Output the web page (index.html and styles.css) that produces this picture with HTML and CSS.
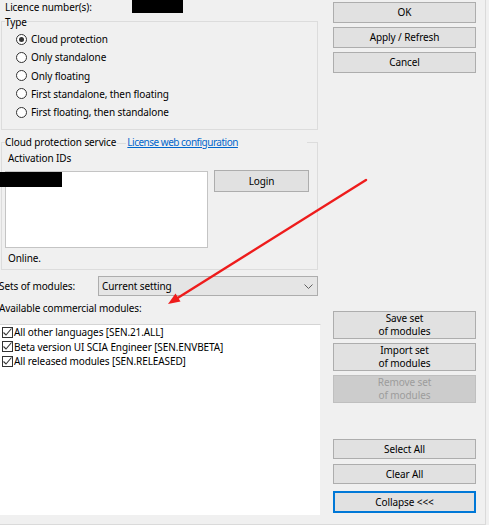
FILE: index.html
```html
<!DOCTYPE html>
<html lang="en">
  <head>
    <meta charset="UTF-8" />
    <title>Licence settings</title>
    <link rel="stylesheet" href="styles.css">
  </head>
  <body>
    <div class="dialog">
      <div class="main">
        <div class="licence-row">
          <span class="licence-label">Licence number(s):</span>
          <span class="redacted licence-id"></span>
        </div>

        <!-- Protection type -->
        <fieldset class="group type-group">
          <legend>Type</legend>
          <ul class="radio-list">
            <li><span class="radio checked"></span>Cloud protection</li>
            <li><span class="radio"></span>Only standalone</li>
            <li><span class="radio"></span>Only floating</li>
            <li><span class="radio"></span>First standalone, then floating</li>
            <li><span class="radio"></span>First floating, then standalone</li>
          </ul>
        </fieldset>

        <!-- Cloud service -->
        <fieldset class="group cloud-group">
          <legend><span>Cloud protection service</span><span class="legend-gap"></span><a href="#" class="legend-link">License web configuration</a></legend>
          <div class="field-label">Activation IDs</div>
          <div class="activation-row">
            <div class="activation-list"><span class="redacted activation-id"></span></div>
            <button class="btn login-btn">Login</button>
          </div>
          <div class="status">Online.</div>
        </fieldset>

        <div class="sets-row">
          <span class="sets-label">Sets of modules:</span>
          <div class="combo">
            <span>Current setting</span>
            <svg width="9" height="5" viewBox="0 0 9 5"><path d="M0.5 0.5 L4.5 4.5 L8.5 0.5" fill="none" stroke="#606060" stroke-width="1"/></svg>
          </div>
        </div>
        <div class="modules-label">Available commercial modules:</div>
        <ul class="module-list">
          <li><span class="check"><svg width="11" height="11" viewBox="0 0 11 11"><path d="M1.5 5.5 L4 8 L9.5 1.5" fill="none" stroke="#333" stroke-width="1.1"/></svg></span>All other languages [SEN.21.ALL]</li>
          <li><span class="check"><svg width="11" height="11" viewBox="0 0 11 11"><path d="M1.5 5.5 L4 8 L9.5 1.5" fill="none" stroke="#333" stroke-width="1.1"/></svg></span>Beta version UI SCIA Engineer [SEN.ENVBETA]</li>
          <li><span class="check"><svg width="11" height="11" viewBox="0 0 11 11"><path d="M1.5 5.5 L4 8 L9.5 1.5" fill="none" stroke="#333" stroke-width="1.1"/></svg></span>All released modules [SEN.RELEASED]</li>
        </ul>
      </div>

      <div class="side">
        <button class="btn ok-btn">OK</button>
        <button class="btn">Apply / Refresh</button>
        <button class="btn">Cancel</button>

        <button class="btn tall save-btn">Save set<br>of modules</button>
        <button class="btn tall">Import set<br>of modules</button>
        <button class="btn tall" disabled>Remove set<br>of modules</button>

        <button class="btn short select-btn">Select All</button>
        <button class="btn short">Clear All</button>
        <button class="btn collapse-btn">Collapse &lt;&lt;&lt;</button>
      </div>
    </div>

    <!-- annotation arrow -->
    <svg class="arrow" width="489" height="525" viewBox="0 0 489 525">
      <line x1="366" y1="180" x2="176" y2="299" stroke="#ee1c1c" stroke-width="2.4" stroke-linecap="round"/>
      <polygon points="168,304 180.5,301.5 175.5,293.5" fill="#ee1c1c"/>
    </svg>
  </body>
</html>
```

FILE: styles.css
```css
/* General */
html {
  background-color: #f0f0f0;
}

body {
  margin: 0;
  width: 489px;
  height: 525px;
  overflow: hidden;
  position: relative;
  font-family: "Noto Sans", "Open Sans", sans-serif;
  font-size: 10px;
  letter-spacing: -0.1px;
  color: #000;
  background-color: #f0f0f0;
}

ul {
  list-style: none;
  margin: 0;
  padding: 0;
}

.dialog {
  display: flex;
  width: 486px;
  height: 525px;
  border-right: 1px solid #dadada;
  border-bottom: 1px solid #dadada;
  box-sizing: border-box;
}

.main {
  width: 321px;
  flex: none;
}

.redacted {
  display: inline-block;
  background-color: #000;
}

/* Licence row */
.licence-row {
  display: flex;
  height: 14px;
  line-height: 14px;
  padding-left: 5px;
}

.licence-label {
  width: 127px;
}

.licence-id {
  width: 51px;
  height: 13px;
}

/* Group boxes */
.group {
  margin: 0 0 0 1px;
  width: 317px;
  min-width: 0;
  box-sizing: border-box;
  border: 1px solid #dcdcdc;
  padding: 0 0 0 3px;
}

.group legend {
  padding: 0;
  height: 14px;
  line-height: 14px;
  white-space: nowrap;
}

.type-group {
  height: 116px;
}

/* label text sits a little under the frame line */
.type-group legend {
  line-height: 17px;
}

.radio-list {
  margin: 2px 0 0 11px;
}

.radio-list li {
  display: flex;
  align-items: center;
  height: 18.25px;
}

.radio {
  width: 11px;
  height: 11px;
  box-sizing: border-box;
  border: 1px solid #333;
  border-radius: 50%;
  background-color: #fff;
  margin-right: 4px;
  position: relative;
}

.radio.checked::after {
  content: "";
  position: absolute;
  left: 2px;
  top: 2px;
  width: 5px;
  height: 5px;
  border-radius: 50%;
  background-color: #333;
}

.cloud-group {
  margin-top: 5px;
  height: 135px;
}

.legend-gap {
  display: inline-block;
  width: 9px;
  height: 1px;
  margin: 0 1px;
  background-color: #dcdcdc;
  vertical-align: middle;
}

.legend-link {
  display: inline-block;
  width: 180px;
  color: #0066cc;
  letter-spacing: -0.5px;
}

.field-label {
  margin-top: 2px;
  padding-left: 3px;
  line-height: 14px;
}

.activation-row {
  display: flex;
  align-items: flex-start;
  margin-top: 5px;
}

.activation-list {
  margin-top: 1px;
  width: 203px;
  height: 77px;
  box-sizing: border-box;
  border: 1px solid #c4c4c4;
  background-color: #fff;
}

.activation-id {
  display: block;
  width: 62px;
  height: 15px;
  margin-left: -6px;
}

.status {
  margin-top: 3px;
  padding-left: 3px;
  line-height: 14px;
}

/* Module sets */
.sets-row {
  display: flex;
  align-items: center;
  margin-top: 6px;
  height: 20px;
}

.sets-label {
  margin-left: -1px;
  width: 99px;
}

.combo {
  display: flex;
  align-items: center;
  justify-content: space-between;
  width: 220px;
  height: 20px;
  box-sizing: border-box;
  border: 1px solid #adadad;
  background-color: #e5e5e5;
  padding: 0 4px 0 3px;
}

.modules-label {
  margin: 5px 0 0 -1px;
  line-height: 14px;
}

.module-list {
  margin: 9px 0 0 -1px;
  width: 322px;
  height: 191px;
  box-sizing: border-box;
  border: 1px solid #d4d4d4;
  border-right-color: #f0f0f0;
  border-bottom: none;
  background-color: #fff;
  padding-left: 2px;
}

.module-list li {
  display: flex;
  align-items: center;
  height: 14.5px;
}

.check {
  display: flex;
  width: 11px;
  height: 11px;
  box-sizing: border-box;
  border: 1px solid #333;
  background-color: #fff;
  margin-right: 1px;
}

.check svg {
  margin: -1px;
}

/* Buttons */
.btn {
  font-family: inherit;
  font-size: inherit;
  letter-spacing: inherit;
  color: #000;
  background-color: #e1e1e1;
  border: 1px solid #adadad;
  border-radius: 0;
  padding: 0;
  margin: 0;
  line-height: 13px;
  box-sizing: border-box;
}

.btn:disabled {
  background-color: #cccccc;
  border-color: #bfbfbf;
  color: #9c9c9c;
}

.login-btn {
  margin-left: 6px;
  width: 95px;
  height: 22px;
}

.side {
  display: flex;
  flex-direction: column;
  margin-left: 12px;
  width: 143px;
  flex: none;
}

.side .btn {
  height: 21px;
  margin-top: 4px;
}

.side .ok-btn {
  margin-top: 2px;
}

.side .tall {
  height: 28px;
  margin-top: 4px;
}

.side .save-btn {
  margin-top: 238px;
}

.side .short {
  height: 20px;
  margin-top: 5px;
}

.side .select-btn {
  margin-top: 36px;
}

.side .collapse-btn {
  height: 22px;
  margin-top: 7px;
  border: 2px solid #0078d7;
}

/* Annotation */
.arrow {
  position: absolute;
  left: 0;
  top: 0;
  pointer-events: none;
}
```
